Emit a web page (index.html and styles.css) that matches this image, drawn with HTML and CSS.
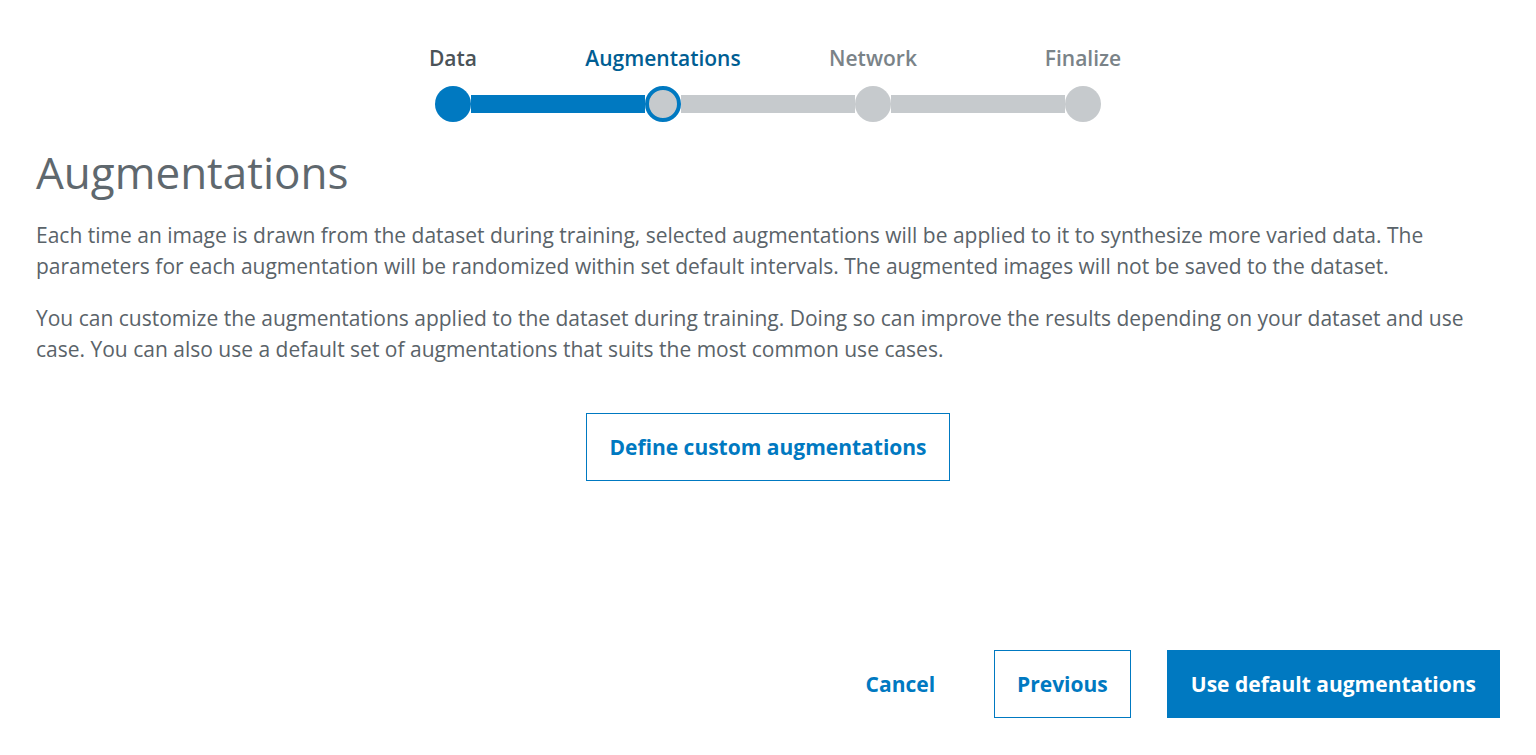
FILE: index.html
```html
<!DOCTYPE html>
<html lang="en">
<head>
<meta charset="utf-8">
<title>Augmentations</title>
<link rel="stylesheet" href="styles.css">
</head>
<body>
<div class="page">
  <div class="stepper">
    <div class="labels">
      <div class="label done">Data</div>
      <div class="label current">Augmentations</div>
      <div class="label">Network</div>
      <div class="label">Finalize</div>
    </div>
    <div class="track">
      <span class="node done"></span>
      <span class="seg done"></span>
      <span class="node current"></span>
      <span class="seg"></span>
      <span class="node"></span>
      <span class="seg"></span>
      <span class="node"></span>
    </div>
  </div>

  <main class="content">
    <h1 class="title">Augmentations</h1>
    <p class="text">Each time an image is drawn from the dataset during training, selected augmentations will be applied to it to synthesize more varied data. The parameters for each augmentation will be randomized within set default intervals. The augmented images will not be saved to the dataset.</p>
    <p class="text">You can customize the augmentations applied to the dataset during training. Doing so can improve the results depending on your dataset and use case. You can also use a default set of augmentations that suits the most common use cases.</p>
    <div class="center-action">
      <button class="btn btn-outline">Define custom augmentations</button>
    </div>
  </main>

  <footer class="actions">
    <button class="btn btn-link">Cancel</button>
    <button class="btn btn-outline">Previous</button>
    <button class="btn btn-primary">Use default augmentations</button>
  </footer>
</div>
</body>
</html>
```

FILE: styles.css
```css
* { box-sizing: border-box; }
html, body { margin: 0; padding: 0; background: #ffffff; }
body {
  font-family: "Open Sans", "Noto Sans", "Liberation Sans", sans-serif;
  color: #5a6369;
}
.page {
  height: 755px;
  padding: 0 36px 37px;
  display: flex;
  flex-direction: column;
}
.stepper {
  padding-top: 44px;
  display: flex;
  flex-direction: column;
  align-items: center;
}
.labels {
  display: grid;
  grid-template-columns: repeat(4, 210px);
}
.label {
  text-align: center;
  font-size: 21px;
  font-weight: 600;
  line-height: 28px;
  color: #7a8388;
}
.label.done { color: #4b5358; }
.label.current { color: #005e93; }
.track {
  margin-top: 14px;
  display: flex;
  align-items: center;
}
.node {
  width: 36px;
  height: 36px;
  border-radius: 50%;
  background: #c6cacd;
  flex: none;
}
.node.done { background: #0079c1; }
.node.current { border: 4px solid #0079c1; background: #c6cacd; }
.seg {
  width: 174px;
  height: 18px;
  background: #c6cacd;
  flex: none;
}
.seg.done { background: #0079c1; }

.content { flex: 1; }
.title {
  margin: 20px 0 0;
  font-size: 44px;
  font-weight: 400;
  line-height: 60px;
  color: #5f686e;
}
.text {
  margin: 18px 0 0;
  font-size: 21px;
  line-height: 31px;
  color: #5a6369;
}
.text + .text { margin-top: 21px; }
.center-action {
  display: flex;
  justify-content: center;
  margin-top: 48px;
}
.btn {
  font-family: inherit;
  font-size: 21px;
  font-weight: 700;
  height: 68px;
  padding: 0 22px;
  border: 1px solid transparent;
  background: transparent;
  color: #0079c1;
  cursor: pointer;
}
.btn-outline { border-color: #0079c1; background: #ffffff; }
.btn-primary { background: #0079c1; border-color: #0079c1; color: #ffffff; padding: 0 23px; }
.actions {
  display: flex;
  justify-content: flex-end;
  gap: 36px;
}
```
